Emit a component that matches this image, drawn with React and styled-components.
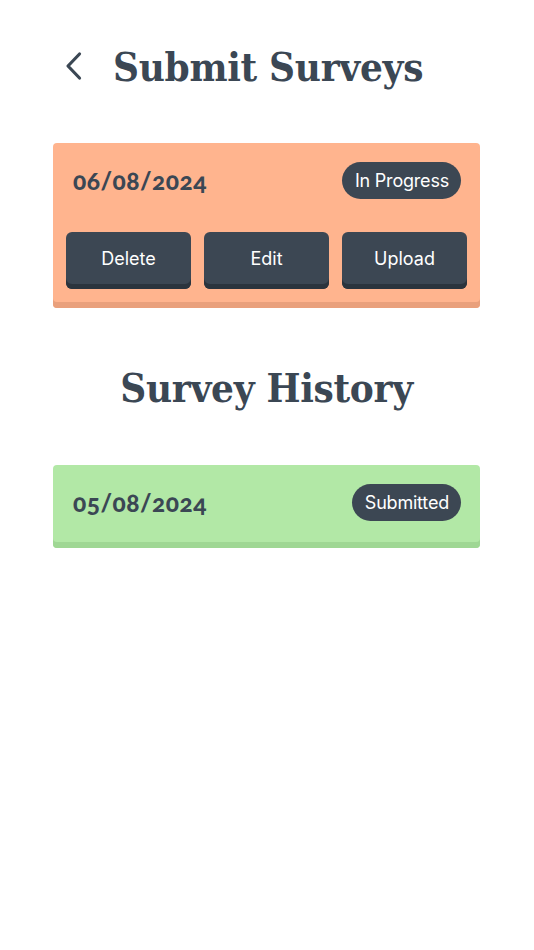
import React from 'react';
import styled, { createGlobalStyle } from 'styled-components';

const GlobalStyle = createGlobalStyle`
    html, body {
        margin: 0;
        padding: 0;
        background: #ffffff;
    }
    body {
        font-family: 'Inter', 'Liberation Sans', sans-serif;
    }
`;

const activeSurveys = [{ id: 1, date: '06/08/2024', status: 'In Progress' }];
const historySurveys = [{ id: 2, date: '05/08/2024', status: 'Submitted' }];

function BackIcon() {
    return (
        <svg width="20" height="30" viewBox="0 0 20 30" fill="none">
            <path
                d="M15.5 3 L4 15 L15.5 27"
                stroke="#3b4754"
                strokeWidth="3.2"
                strokeLinecap="round"
                strokeLinejoin="round"
            />
        </svg>
    );
}

function SurveyCard({ survey, tone, actions }) {
    return (
        <Card $tone={tone} $compact={!actions}>
            <CardHeader>
                <DateText>{survey.date}</DateText>
                <StatusBadge>{survey.status}</StatusBadge>
            </CardHeader>
            {actions && (
                <ActionRow>
                    {actions.map((label) => (
                        <ActionButton key={label}>{label}</ActionButton>
                    ))}
                </ActionRow>
            )}
        </Card>
    );
}

export default function App() {
    return (
        <Page>
            <GlobalStyle />
            <Header>
                <BackButton aria-label="Back">
                    <BackIcon />
                </BackButton>
                <Title>Submit Surveys</Title>
            </Header>

            {activeSurveys.map((s) => (
                <SurveyCard key={s.id} survey={s} tone="orange" actions={['Delete', 'Edit', 'Upload']} />
            ))}

            <SectionTitle>Survey History</SectionTitle>

            {historySurveys.map((s) => (
                <SurveyCard key={s.id} survey={s} tone="green" />
            ))}
        </Page>
    );
}

const tones = {
    orange: { bg: '#ffb48e', edge: '#e9a07c' },
    green: { bg: '#b2e8a6', edge: '#9fd794' },
};

const Page = styled.div`
    width: 534px;
    min-height: 950px;
    box-sizing: border-box;
    padding: 44px 54px 0 53px;
    display: flex;
    flex-direction: column;
`;

const Header = styled.div`
    display: flex;
    align-items: center;
    gap: 29px;
    padding-left: 11px;
    height: 44px;
    margin-bottom: 55px;
`;

const BackButton = styled.button`
    background: none;
    border: none;
    padding: 0;
    display: flex;
    align-items: center;
    cursor: pointer;
`;

const Title = styled.h1`
    margin: 0;
    font-family: 'DejaVu Serif Condensed', 'DejaVu Serif', serif;
    font-stretch: condensed;
    font-weight: 900;
    font-size: 40px;
    color: #3b4754;
    letter-spacing: -0.3px;
`;

const Card = styled.div`
    background: ${({ $tone }) => tones[$tone].bg};
    border-radius: 4px;
    box-shadow: inset 0 -6px 0 ${({ $tone }) => tones[$tone].edge};
    padding: 19px 13px ${({ $compact }) => ($compact ? '27px' : '19px')};
    display: flex;
    flex-direction: column;
    gap: 33px;
`;

const CardHeader = styled.div`
    display: flex;
    align-items: center;
    justify-content: space-between;
    padding: 0 6px 0 7px;
`;

const DateText = styled.span`
    font-family: 'Lato', 'Liberation Sans', sans-serif;
    font-weight: 900;
    font-size: 24.5px;
    font-variant-numeric: oldstyle-nums;
    color: #3b4754;
    letter-spacing: 0.5px;
`;

const StatusBadge = styled.span`
    background: #3c4753;
    color: #ffffff;
    border-radius: 19px;
    height: 37px;
    padding: 0 12px 0 13px;
    display: flex;
    align-items: center;
    font-family: 'Inter', 'Liberation Sans', sans-serif;
    font-size: 18px;
    letter-spacing: -0.2px;
`;

const ActionRow = styled.div`
    display: grid;
    grid-template-columns: repeat(3, 1fr);
    gap: 13px;
`;

const ActionButton = styled.button`
    height: 57px;
    border: none;
    border-radius: 6px;
    background: #3c4753;
    box-shadow: inset 0 -5px 0 #2b343d;
    color: #ffffff;
    font-family: 'Inter', 'Liberation Sans', sans-serif;
    font-size: 18px;
    padding-bottom: 5px;
    cursor: pointer;
`;

const SectionTitle = styled.h2`
    margin: 56px 0 54px;
    text-align: center;
    font-family: 'DejaVu Serif Condensed', 'DejaVu Serif', serif;
    font-stretch: condensed;
    font-weight: 900;
    font-size: 40px;
    color: #3b4754;
    letter-spacing: -0.3px;
`;
